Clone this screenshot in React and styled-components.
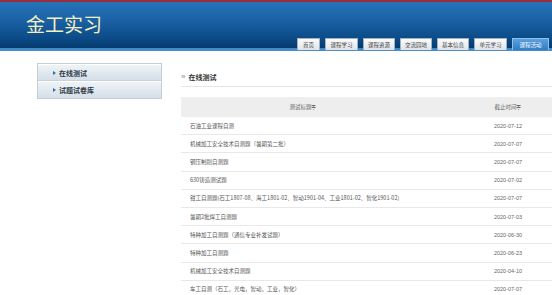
import React from "react"
import styled, { createGlobalStyle } from "styled-components"

const GlobalStyle = createGlobalStyle`
  html, body {
    margin: 0;
    padding: 0;
    background: #ffffff;
    overflow: hidden;
    font-family: "Noto Sans CJK SC", "Noto Sans", sans-serif;
  }
`

const Page = styled.div`
  width: 552px;
  height: 295px;
  overflow: hidden;
`

const Header = styled.div`
  height: 48px;
  border-top: 2px solid #9b2c3c;
  background: linear-gradient(
    to bottom,
    #2673b8 0%,
    #1b63a6 35%,
    #0b4a86 75%,
    #063b6f 93%,
    #3c86c6 93%,
    #4a90cc 100%
  );
  display: flex;
  justify-content: space-between;
  align-items: flex-end;
  padding: 0 3px 1px 26px;
`

const SiteTitle = styled.h1`
  align-self: flex-start;
  margin: 10px 0 0;
  font-size: 19px;
  line-height: 24px;
  font-weight: 400;
  color: #f4efc2;
`

const Tabs = styled.div`
  display: flex;
  gap: 5px;
`

const Tab = styled.div`
  height: 12px;
  width: ${(p) => p.w}px;
  box-sizing: border-box;
  display: flex;
  align-items: center;
  justify-content: center;
  font-size: 5.5px;
  color: ${(p) => (p.active ? "#ffffff" : "#444")};
  border: 1px solid ${(p) => (p.active ? "#8fc0e6" : "#9fb2c6")};
  border-bottom: none;
  background: ${(p) =>
    p.active
      ? "linear-gradient(to bottom, #5aa2de, #2f7cc4)"
      : "linear-gradient(to bottom, #fbfbfb, #dfe3e8)"};
`

const Body = styled.div`
  display: flex;
  align-items: flex-start;
  padding: 12px 0 0 37px;
  gap: 19px;
`

const SideMenu = styled.div`
  width: 125px;
  flex-shrink: 0;
  box-sizing: border-box;
  border: 1px solid #c6ccd2;
  background: #e9eef2;
`

const SideItem = styled.div`
  height: 17px;
  box-sizing: border-box;
  display: flex;
  align-items: center;
  gap: 3px;
  padding-left: 15px;
  font-size: 7px;
  font-weight: 700;
  color: #2e3a46;
  background: linear-gradient(to bottom, #eef3f7, #d5dfe8);
  border-bottom: 1px solid #c9d1d9;
  border-top: 1px solid #ffffff;
  &:last-child {
    border-bottom: none;
  }
`

const Bullet = styled.span`
  width: 0;
  height: 0;
  border-top: 2px solid transparent;
  border-bottom: 2px solid transparent;
  border-left: 3px solid #2d6fb0;
`

const Main = styled.div`
  width: 410px;
  flex-shrink: 0;
`

const Heading = styled.div`
  display: flex;
  align-items: center;
  gap: 3px;
  height: 15px;
  margin-top: 6px;
  font-size: 7px;
  font-weight: 700;
  color: #333;
  border-bottom: 1px solid #e6e6e6;
  padding-bottom: 2px;
`

const Chevron = styled.span`
  font-family: "Liberation Sans", sans-serif;
  font-size: 8px;
  font-weight: 400;
  color: #888;
`

const Table = styled.div`
  margin-top: 10px;
`

const HeadRow = styled.div`
  display: grid;
  grid-template-columns: 244px 1fr;
  height: 20px;
  align-items: center;
  background: #eeeeee;
  font-size: 5.5px;
  color: #666;
  text-align: center;
`

const Row = styled.div`
  display: grid;
  grid-template-columns: 244px 1fr;
  height: 18.2px;
  box-sizing: border-box;
  align-items: center;
  border-bottom: 1px solid #e8e8e8;
  font-size: 5.5px;
  color: #555;
`

const TitleCell = styled.div`
  padding-left: 9px;
  white-space: nowrap;
`

const DateCell = styled.div`
  text-align: center;
  font-family: "Liberation Sans", sans-serif;
  color: #666;
`

const tabs = [
  { label: "首页", w: 23 },
  { label: "课程学习", w: 33 },
  { label: "课程资源", w: 32 },
  { label: "交流园地", w: 32 },
  { label: "基本信息", w: 32 },
  { label: "单元学习", w: 33 },
  { label: "课程活动", w: 37, active: true },
]

const rows = [
  ["石油工业课程自测", "2020-07-12"],
  ["机械加工安全技术自测题（暑期第二批）", "2020-07-07"],
  ["钢压制削自测题", "2020-07-07"],
  ["630铸造测试题", "2020-07-02"],
  ["钳工自测题(石工1807-08、海工1801-02、智动1901-04、工业1801-02、智化1901-02)", "2020-07-07"],
  ["暑期2批焊工自测题", "2020-07-03"],
  ["特种加工自测题（通信专业补发试题）", "2020-06-30"],
  ["特种加工自测题", "2020-06-23"],
  ["机械加工安全技术自测题", "2020-04-10"],
  ["车工自测（石工，光电，智动，工业，智化）", "2020-07-07"],
]

export default function App() {
  return (
    <Page>
      <GlobalStyle />
      <Header>
        <SiteTitle>金工实习</SiteTitle>
        <Tabs>
          {tabs.map((t) => (
            <Tab key={t.label} w={t.w} active={t.active}>
              {t.label}
            </Tab>
          ))}
        </Tabs>
      </Header>
      <Body>
        <SideMenu>
          <SideItem>
            <Bullet />
            在线测试
          </SideItem>
          <SideItem>
            <Bullet />
            试题试卷库
          </SideItem>
        </SideMenu>
        <Main>
          <Heading>
            <Chevron>»</Chevron>
            在线测试
          </Heading>
          <Table>
            <HeadRow>
              <div>测试标题≑</div>
              <div>截止时间≑</div>
            </HeadRow>
            {rows.map(([title, date], i) => (
              <Row key={i}>
                <TitleCell>{title}</TitleCell>
                <DateCell>{date}</DateCell>
              </Row>
            ))}
          </Table>
        </Main>
      </Body>
    </Page>
  )
}
